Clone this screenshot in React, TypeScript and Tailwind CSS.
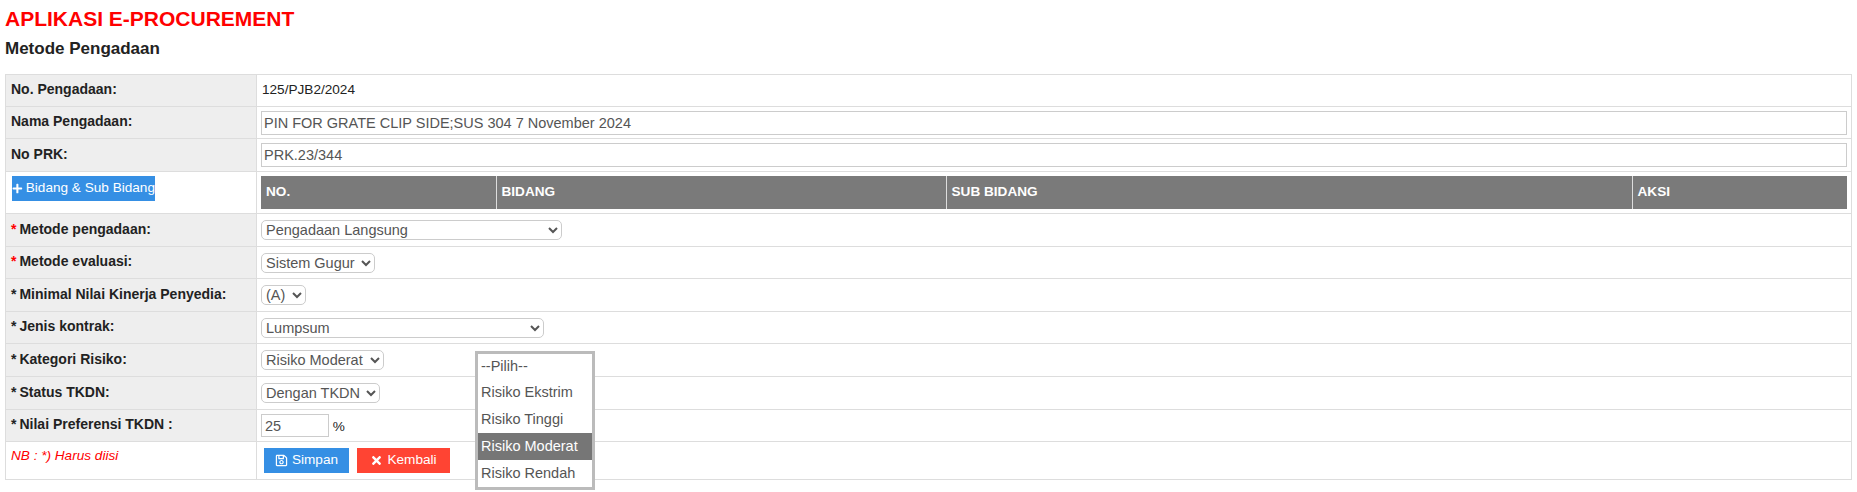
import React from 'react'
import { FaPlus, FaRegSave, FaTimes } from 'react-icons/fa'

const labelCell = 'w-[251px] border border-[#ddd] bg-[#eee] px-[5px] pb-[2px] align-middle text-[14px] font-bold text-[#222]'
const valueCell = 'border border-[#ddd] bg-white px-1 align-middle'
const selectBox = 'h-5 rounded-[5px] border border-[#ccc] bg-white text-[14.5px] leading-none text-[#555]'
const textInput = 'block h-6 w-[1586px] border border-[#ccc] bg-white px-[2px] text-[14.5px] text-[#555]'

const Req = ({ red }: { red?: boolean }) => (
  <span className={red ? 'mr-[3px] text-[#f00]' : 'mr-[3px]'}>*</span>
)

const Pick = ({ width, value }: { width: string; value: string }) => (
  <select className={`${selectBox} ${width}`} defaultValue={value}>
    <option>{value}</option>
  </select>
)

const App: React.FC = () => {
  const risiko = ['--Pilih--', 'Risiko Ekstrim', 'Risiko Tinggi', 'Risiko Moderat', 'Risiko Rendah']

  return (
    <div className="relative h-[492px] overflow-hidden bg-white pl-[5px] font-['Liberation_Sans',Arial,sans-serif]">
      <h1 className="pt-[7px] text-[21px] leading-6 font-bold text-[#f00]">APLIKASI E-PROCUREMENT</h1>
      <h2 className="mt-[8px] text-[17px] leading-5 font-bold text-[#222]">Metode Pengadaan</h2>

      <table className="mt-[15px] w-[1847px] table-fixed border-collapse">
        <tbody>
          <tr className="h-[32px]">
            <td className={labelCell}>No. Pengadaan:</td>
            <td className={`${valueCell} pl-[5px] text-[13.6px] text-[#222]`}>125/PJB2/2024</td>
          </tr>
          <tr className="h-[32px]">
            <td className={labelCell}>Nama Pengadaan:</td>
            <td className={valueCell}>
              <input className={textInput} defaultValue="PIN FOR GRATE CLIP SIDE;SUS 304 7 November 2024" />
            </td>
          </tr>
          <tr className="h-[33px]">
            <td className={labelCell}>No PRK:</td>
            <td className={valueCell}>
              <input className={textInput} defaultValue="PRK.23/344" />
            </td>
          </tr>
          <tr className="h-[42px]">
            <td className="border border-[#ddd] bg-white px-[6px] pb-[9px] align-middle">
              <button className="flex h-[25px] w-[143px] items-center justify-center gap-[3px] bg-[#358fe4] text-[13.6px] whitespace-nowrap text-white">
                <FaPlus className="h-[11px] w-[11px]" />
                Bidang &amp; Sub Bidang
              </button>
            </td>
            <td className={valueCell}>
              <table className="w-[1586px] table-fixed border-collapse">
                <thead>
                  <tr className="h-[33px] bg-[#7a7a7a] text-left text-[13.6px] font-bold text-white">
                    <th className="w-[235px] border-r border-[#ddd] pl-[5px]">NO.</th>
                    <th className="w-[450px] border-r border-[#ddd] pl-[5px]">BIDANG</th>
                    <th className="w-[686px] border-r border-[#ddd] pl-[5px]">SUB BIDANG</th>
                    <th className="pl-[5px]">AKSI</th>
                  </tr>
                </thead>
              </table>
            </td>
          </tr>
          <tr className="h-[33px]">
            <td className={labelCell}><Req red />Metode pengadaan:</td>
            <td className={valueCell}><Pick width="w-[301px]" value="Pengadaan Langsung" /></td>
          </tr>
          <tr className="h-[32px]">
            <td className={labelCell}><Req red />Metode evaluasi:</td>
            <td className={valueCell}><Pick width="w-[114px]" value="Sistem Gugur" /></td>
          </tr>
          <tr className="h-[33px]">
            <td className={labelCell}><Req />Minimal Nilai Kinerja Penyedia:</td>
            <td className={valueCell}><Pick width="w-[45px]" value="(A)" /></td>
          </tr>
          <tr className="h-[32px]">
            <td className={labelCell}><Req />Jenis kontrak:</td>
            <td className={valueCell}><Pick width="w-[283px]" value="Lumpsum" /></td>
          </tr>
          <tr className="h-[33px]">
            <td className={labelCell}><Req />Kategori Risiko:</td>
            <td className={valueCell}><Pick width="w-[123px]" value="Risiko Moderat" /></td>
          </tr>
          <tr className="h-[33px]">
            <td className={labelCell}><Req />Status TKDN:</td>
            <td className={valueCell}><Pick width="w-[119px]" value="Dengan TKDN" /></td>
          </tr>
          <tr className="h-[32px]">
            <td className={labelCell}><Req />Nilai Preferensi TKDN :</td>
            <td className={`${valueCell} text-[13.6px] text-[#222]`}>
              <input className="h-[23px] w-[68px] border border-[#ccc] bg-white px-[3px] text-[14.5px] text-[#555]" defaultValue="25" /> %
            </td>
          </tr>
          <tr className="h-[38px]">
            <td className="border border-[#ddd] bg-white px-[5px] pb-[8px] align-middle text-[13.6px] text-[#f00] italic">NB : *) Harus diisi</td>
            <td className={`${valueCell} pl-[7px]`}>
              <div className="flex gap-2">
                <button className="flex h-[25px] w-[85px] items-center justify-center gap-1 bg-[#358fe4] text-[13.6px] text-white">
                  <FaRegSave className="h-[13px] w-[13px]" />
                  Simpan
                </button>
                <button className="flex h-[25px] w-[93px] items-center justify-center gap-1 bg-[#ff4433] text-[13.6px] text-white">
                  <FaTimes className="h-[13px] w-[13px]" />
                  Kembali
                </button>
              </div>
            </td>
          </tr>
        </tbody>
      </table>

      {/* open list of Kategori Risiko */}
      <ul className="absolute top-[351px] left-[475px] h-[139px] w-[120px] border-[3px] border-[#bbb] bg-white text-[14.5px] text-[#555]">
        {risiko.map((item, index) => (
          <li
            key={item}
            className={
              index === 0
                ? 'h-[25px] pl-[3px] leading-[25px]'
                : item === 'Risiko Moderat'
                  ? 'h-[27px] bg-[#767676] pl-[3px] leading-[27px] text-white'
                  : 'h-[27px] pl-[3px] leading-[27px]'
            }
          >
            {item}
          </li>
        ))}
      </ul>
    </div>
  )
}

export default App
